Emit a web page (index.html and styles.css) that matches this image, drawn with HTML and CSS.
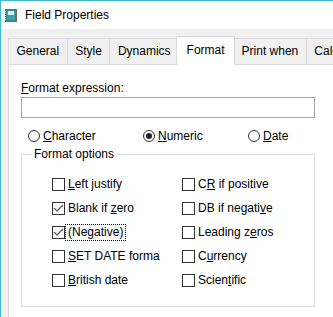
FILE: index.html
```html
<!DOCTYPE html>
<html lang="en">
<head>
  <title>Field Properties</title>
  <meta charset="UTF-8">
  <meta name="viewport" content="width=device-width, initial-scale=1.0">
  <link rel="stylesheet" href="styles.css">
</head>
<body>
  <div class="window">
    <div class="titlebar">
      <svg class="app-icon" width="12" height="13" viewBox="0 0 12 13">
        <rect x="0.5" y="0.5" width="11" height="12" fill="#2f8c8f" stroke="#6e6e6e"/>
        <rect x="2" y="2" width="8" height="9" fill="#3aa3a6"/>
        <rect x="3" y="2" width="6" height="4" fill="#d9efef"/>
        <rect x="0" y="2" width="1" height="1" fill="#e6c84a"/>
        <rect x="0" y="4" width="1" height="1" fill="#e6c84a"/>
        <rect x="0" y="6" width="1" height="1" fill="#e6c84a"/>
        <rect x="0" y="8" width="1" height="1" fill="#e6c84a"/>
        <rect x="0" y="10" width="1" height="1" fill="#e6c84a"/>
      </svg>
      <span class="title">Field Properties</span>
    </div>

    <div class="dialog">
      <div class="tabs">
        <div class="tab">General</div>
        <div class="tab">Style</div>
        <div class="tab">Dynamics</div>
        <div class="tab active">Format</div>
        <div class="tab">Print when</div>
        <div class="tab">Calculation</div>
      </div>

      <div class="panel">
        <div class="panel-body">
          <div class="field-label"><u>F</u>ormat expression:</div>
          <div class="textbox"></div>

          <div class="radios">
            <div class="option"><span class="radio"></span><span class="text"><u>C</u>haracter</span></div>
            <div class="option"><span class="radio on"></span><span class="text"><u>N</u>umeric</span></div>
            <div class="option"><span class="radio"></span><span class="text"><u>D</u>ate</span></div>
          </div>

          <fieldset class="group">
            <legend>Format options</legend>
            <div class="checks">
              <div class="option"><span class="box"></span><span class="text"><u>L</u>eft justify</span></div>
              <div class="option"><span class="box checked"><svg viewBox="0 0 11 11" width="11" height="11"><polyline points="1,5 4,8 10,2" fill="none" stroke="#5a5a5a" stroke-width="1.2"/></svg></span><span class="text">Blank if <u>z</u>ero</span></div>
              <div class="option"><span class="box checked"><svg viewBox="0 0 11 11" width="11" height="11"><polyline points="1,5 4,8 10,2" fill="none" stroke="#5a5a5a" stroke-width="1.2"/></svg></span><span class="text focus">(Ne<u>g</u>ative)</span></div>
              <div class="option"><span class="box"></span><span class="text"><u>S</u>ET DATE forma</span></div>
              <div class="option"><span class="box"></span><span class="text"><u>B</u>ritish date</span></div>
              <div class="option"><span class="box"></span><span class="text">C<u>R</u> if positive</span></div>
              <div class="option"><span class="box"></span><span class="text">DB if negati<u>v</u>e</span></div>
              <div class="option"><span class="box"></span><span class="text">Leading z<u>e</u>ros</span></div>
              <div class="option"><span class="box"></span><span class="text">C<u>u</u>rrency</span></div>
              <div class="option"><span class="box"></span><span class="text">Scien<u>t</u>ific</span></div>
            </div>
          </fieldset>
        </div>
      </div>
    </div>
  </div>
</body>
</html>
```

FILE: styles.css
```css
body {
  margin: 0;
  font-family: 'Segoe UI', 'Liberation Sans', Arial, sans-serif;
  font-size: 12px;
  line-height: 15px;
  color: #000;
  background: #f0f0f0;
  overflow: hidden;
}
.window {
  width: 340px;
  height: 317px;
  border-top: 1px solid #3fb8cb;
  border-left: 1px solid #3fb8cb;
  background: #f0f0f0;
  overflow: hidden;
}
.titlebar {
  height: 28px;
  background: #fff;
  display: flex;
  align-items: center;
  padding-left: 4px;
  gap: 8px;
}
.dialog {
  padding: 6px 0 0 7px;
}
.tabs {
  display: flex;
  align-items: flex-end;
  height: 29px;
}
.tab {
  flex-shrink: 0;
  white-space: nowrap;
  height: 25px;
  line-height: 25px;
  padding: 0 7.5px;
  border: 1px solid #d9d9d9;
  border-bottom: 0;
  margin-right: -1px;
  background: #f0f0f0;
}
.tab.active {
  position: relative;
  z-index: 1;
  height: 28px;
  line-height: 26px;
  padding: 0 9.5px;
  margin: 0 -2px -1px -2px;
  background: #fff;
}
.panel {
  width: 340px;
  height: 260px;
  background: #fff;
  border: 1px solid #d9d9d9;
}
.panel-body {
  width: 294px;
  padding: 16px 0 0 12px;
}
.textbox {
  margin-top: 1px;
  height: 19px;
  border: 1px solid #a5a5a5;
  background: #fff;
}
.radios {
  display: grid;
  grid-template-columns: 115px 105px auto;
  margin-top: 9px;
  padding-left: 7px;
  height: 18px;
  align-items: center;
}
.option {
  display: flex;
  align-items: center;
  white-space: nowrap;
}
.text {
  padding: 0 2px;
  border: 1px dotted transparent;
}
.text.focus {
  border-color: #000;
}
.radio {
  box-sizing: border-box;
  width: 12px;
  height: 12px;
  border: 1px solid #333;
  border-radius: 50%;
  background: #fff;
  display: flex;
  align-items: center;
  justify-content: center;
}
.radio.on::after {
  content: "";
  width: 6px;
  height: 6px;
  border-radius: 50%;
  background: #222;
}
.group {
  margin: 2px 0 0 0;
  padding: 0;
  border: 1px solid #dcdcdc;
  min-width: 0;
}
.group legend {
  margin-left: 10px;
  padding: 0 2px;
  line-height: 15px;
}
.checks {
  display: grid;
  grid-auto-flow: column;
  grid-template-rows: repeat(5, 24px);
  grid-template-columns: 130px auto;
  align-items: center;
  padding: 10px 0 14px 30px;
}
.box {
  box-sizing: border-box;
  width: 13px;
  height: 13px;
  border: 1px solid #333;
  background: #fff;
  display: flex;
  align-items: center;
  justify-content: center;
}
.box svg {
  display: block;
}
```
